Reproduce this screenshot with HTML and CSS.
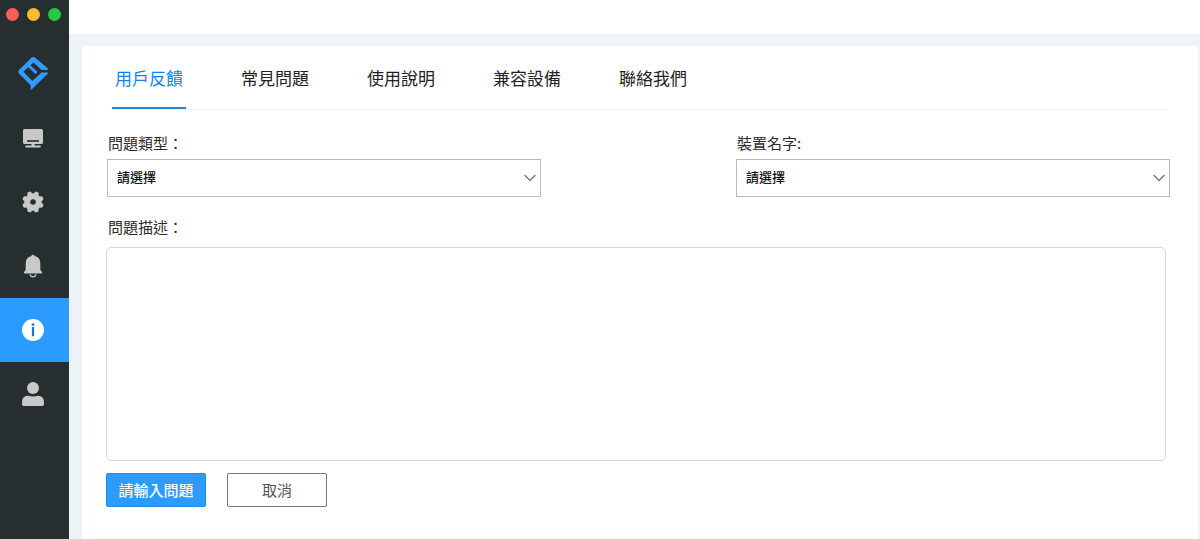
FILE: index.html
```html
<!DOCTYPE html>
<html lang="zh-Hant">
<head>
<meta charset="utf-8">
<title>用戶反饋</title>
<link rel="stylesheet" href="styles.css">
</head>
<body>
<div class="app">
  <aside class="sidebar">
    <div class="window-controls">
      <button class="dot dot-close" type="button" aria-label="關閉"></button>
      <button class="dot dot-minimize" type="button" aria-label="最小化"></button>
      <button class="dot dot-zoom" type="button" aria-label="縮放"></button>
    </div>
    <div class="logo">
      <svg width="32" height="36" viewBox="0 0 32 36" fill="#2f9bff">
        <path fill-rule="evenodd" d="M14.600 2.600 Q16.300 1.200 18 2.600 L30.800 13.200 V15 H24.500 L16.500 7.400 L13.500 10.200 L20.500 17 L18.500 19.200 L11.300 12.300 L6.400 16.800 L15.400 26 L24.500 17.400 H30.800 V18.800 L16.800 32.200 Q15 35 13.200 34.600 Q14 32.500 13.600 30.200 L2 18.600 Q.4 16.800 2 15 Z"/>
      </svg>
    </div>
    <nav class="nav">
      <a class="nav-item" href="#device" aria-label="裝置">
        <svg width="22" height="22" viewBox="0 0 22 22"><rect x="1" y="2" width="20" height="15" rx="1.500" fill="#c8c9c9"/><path d="M5 13.200h12v1.600H5z" fill="#272e30"/><path d="M9.500 17h3v1.600h5.500q.8 0 .8.900t-.8.900H4q-.8 0-.8-.9t.8-.9h5.500z" fill="#c8c9c9"/></svg>
      </a>
      <a class="nav-item" href="#settings" aria-label="設定">
        <svg width="24" height="24" viewBox="0 0 24 24"><g fill="#c8c9c9"><circle cx="12" cy="12" r="8.800"/><rect x="9.800" y="1.200" width="4.400" height="21.600" rx="1.400" transform="rotate(22.500 12 12)"/><rect x="9.800" y="1.200" width="4.400" height="21.600" rx="1.400" transform="rotate(67.500 12 12)"/><rect x="9.800" y="1.200" width="4.400" height="21.600" rx="1.400" transform="rotate(112.500 12 12)"/><rect x="9.800" y="1.200" width="4.400" height="21.600" rx="1.400" transform="rotate(157.500 12 12)"/></g><circle cx="12" cy="12" r="2.800" fill="#272e30"/></svg>
      </a>
      <a class="nav-item" href="#notifications" aria-label="通知">
        <svg width="20" height="24" viewBox="0 0 20 24" fill="#c8c9c9"><path d="M10 .7c1 0 1.500.6 1.700 1.300 3.700.8 5.600 3.500 5.600 7.500v5.500q0 1.600 1.300 2.400c.8.600.7 2-.5 2H1.900c-1.200 0-1.300-1.400-.5-2Q2.700 16.600 2.700 15V9.500C2.700 5.500 4.600 2.800 8.300 2 8.500 1.300 9 .7 10 .7z"/><path d="M7 20.300q.6 2.500 3 2.500t3-2.500" fill="none" stroke="#c8c9c9" stroke-width="1.300"/></svg>
      </a>
      <a class="nav-item active" href="#info" aria-label="資訊" aria-current="page">
        <svg width="22" height="22" viewBox="0 0 22 22"><circle cx="11" cy="11" r="11" fill="#fff"/><circle cx="11" cy="5.600" r="1.400" fill="#1677d8"/><path d="M9.900 8h2.200v9.200H9.900z" fill="#1677d8"/></svg>
      </a>
      <a class="nav-item" href="#account" aria-label="帳戶">
        <svg width="22" height="24" viewBox="0 0 22 24" fill="#c8c9c9"><circle cx="11" cy="6" r="6"/><path d="M6 13.700q5 1.400 10 0 6 .3 6 6.500v2.100q0 1.700-1.700 1.700H1.700Q0 24 0 22.300v-2.100Q0 14 6 13.700z"/></svg>
      </a>
    </nav>
  </aside>
  <div class="workspace">
    <header class="titlebar"></header>
    <main class="panel">
      <nav class="tabs">
        <a class="tab current" href="#feedback" aria-current="page">用戶反饋</a>
        <a class="tab" href="#faq">常見問題</a>
        <a class="tab" href="#manual">使用說明</a>
        <a class="tab" href="#compatible">兼容設備</a>
        <a class="tab" href="#contact">聯絡我們</a>
      </nav>
      <form class="form">
        <div class="select-row">
          <div class="field">
            <label class="label" for="type">問題類型：</label>
            <div class="select-box">
              <select class="select" id="type"><option>請選擇</option></select>
              <svg class="chevron" width="12" height="8" viewBox="0 0 12 8" fill="none" stroke="#777" stroke-width="1.400"><path d="M.6 1 6 6.600 11.400 1"/></svg>
            </div>
          </div>
          <div class="field">
            <label class="label" for="device">裝置名字:</label>
            <div class="select-box">
              <select class="select" id="device"><option>請選擇</option></select>
              <svg class="chevron" width="12" height="8" viewBox="0 0 12 8" fill="none" stroke="#777" stroke-width="1.400"><path d="M.6 1 6 6.600 11.400 1"/></svg>
            </div>
          </div>
        </div>
        <div class="description">
          <label class="label" for="description">問題描述：</label>
          <textarea class="textarea" id="description"></textarea>
        </div>
        <div class="actions">
          <button class="button primary" type="submit">請輸入問題</button>
          <button class="button" type="button">取消</button>
        </div>
      </form>
    </main>
  </div>
</div>
</body>
</html>
```
FILE: styles.css
```css
* {
  box-sizing: border-box;
}

body {
  margin: 0;
  color: #2b2b2b;
  font-family: "Noto Sans CJK TC", sans-serif;
  font-size: 15px;
}

button,
select,
textarea {
  margin: 0;
  font-family: inherit;
}

.app {
  display: flex;
  min-height: 100vh;
}

.sidebar {
  flex: none;
  width: 69px;
  background: #272e30;
}

.window-controls {
  display: flex;
  gap: 8px;
  padding: 8px 0 0 6px;
}

.dot {
  width: 13px;
  height: 13px;
  padding: 0;
  border: 0;
  border-radius: 50%;
}

.dot-close {
  background: #fe5f58;
}

.dot-minimize {
  background: #febc2f;
}

.dot-zoom {
  background: #28c840;
}

.logo {
  display: flex;
  padding: 34px 0 15px 17px;
}

.nav {
  display: flex;
  flex-direction: column;
}

.nav-item {
  display: flex;
  align-items: center;
  justify-content: center;
  height: 64px;
  padding-right: 3px;
}

.nav-item.active {
  background: #2b9bff;
}

.workspace {
  display: flex;
  flex: 1;
  flex-direction: column;
  min-width: 0;
  background: #edf3f6;
}

.titlebar {
  height: 34px;
  background: #fff;
}

.panel {
  flex: 1;
  margin: 12px 2px 0 13px;
  padding: 0 28px 31px 24px;
  border-radius: 2px 2px 0 0;
  background: #fff;
}

.tabs {
  display: flex;
  gap: 52px;
  margin: 0 2px 0 6px;
  border-bottom: 1px solid #f0f2f3;
}

.tab {
  height: 63px;
  padding: 0 3px;
  border-bottom: 2px solid transparent;
  color: #222;
  font-size: 17px;
  line-height: 64px;
  text-decoration: none;
  white-space: nowrap;
}

.tab.current {
  border-color: #1f86dc;
  color: #1583e5;
}

.form {
  padding-top: 22px;
}

.select-row {
  display: grid;
  grid-template-columns: 1fr 1fr;
  gap: 195px;
  padding-left: 1px;
}

.label {
  display: block;
  padding: 0 1px;
  line-height: 22px;
}

.field .label {
  margin-bottom: 5px;
}

.select-box {
  position: relative;
}

.select {
  display: block;
  width: 100%;
  height: 38px;
  padding: 0 32px 4px 9px;
  border: 1px solid #b9b9b9;
  border-radius: 0;
  background: #fff;
  color: #111;
  font-size: 13px;
  font-weight: 500;
  appearance: none;
}

.chevron {
  position: absolute;
  top: 15px;
  right: 5px;
  pointer-events: none;
}

.description {
  padding: 19px 4px 0 0;
}

.description .label {
  margin-bottom: 9px;
  padding-left: 2px;
}

.textarea {
  display: block;
  width: 100%;
  height: 214px;
  padding: 10px;
  border: 1px solid #d6d6d6;
  border-radius: 5px;
  background: #fff;
  font-size: 15px;
  resize: none;
}

.actions {
  display: flex;
  gap: 21px;
  padding-top: 12px;
}

.button {
  min-width: 100px;
  height: 34px;
  padding: 0 11px 1px;
  border: 1px solid #777;
  border-radius: 2px;
  background: #fff;
  color: #555;
  font-size: 15px;
  white-space: nowrap;
}

.button.primary {
  border-color: #1f8df0;
  background: #2b9bff;
  color: #fff;
  font-weight: 500;
}
```
